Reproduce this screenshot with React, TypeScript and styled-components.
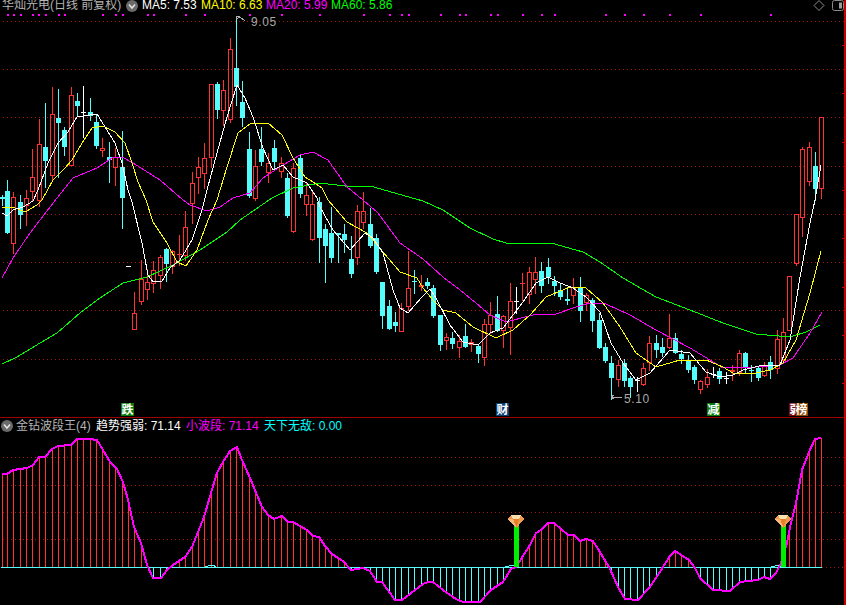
import React from "react";
import styled, { createGlobalStyle } from "styled-components";

const GlobalStyle = createGlobalStyle`
  html, body { margin: 0; padding: 0; background: #000; }
  body { font-family: "Liberation Sans", "Noto Sans CJK SC", sans-serif; overflow: hidden; }
`;

const Page = styled.div`
  width: 846px;
  height: 605px;
  box-sizing: border-box;
  background: #000;
  border-right: 2px solid #c80000;
  display: flex;
  flex-direction: column;
`;
const PricePanel = styled.section`
  height: 417px;
  display: flex;
  flex-direction: column;
`;
const IndicatorPanel = styled.section`
  flex: 1;
  min-height: 0;
  border-top: 1px solid #a00000;
  display: flex;
  flex-direction: column;
`;
const TopLegend = styled.header`
  height: 12px;
  flex: none;
  display: flex;
  align-items: flex-start;
  padding-left: 2px;
  font-size: 12px;
  line-height: 11px;
  white-space: nowrap;
`;
const SubLegend = styled.header`
  height: 16px;
  flex: none;
  display: flex;
  align-items: center;
  padding-left: 1px;
  font-size: 12px;
  line-height: 14px;
  white-space: nowrap;
`;
const Title = styled.span`
  color: #b4b4b4;
  width: ${(p: { $w: number }) => p.$w}px;
  flex: none;
`;
const Reading = styled.span<{ $color: string; $w: number }>`
  color: ${(p) => p.$color};
  width: ${(p) => p.$w}px;
  flex: none;
`;
const Chevron = styled.svg<{ $mr: number }>`
  width: 12px;
  height: 12px;
  flex: none;
  margin-right: ${(p) => p.$mr}px;
`;
const CornerTools = styled.div`
  margin-left: auto;
  display: flex;
  align-items: flex-start;
  gap: 7px;
  padding-right: 0;
`;
const ToolIcon = styled.svg`
  width: 12px;
  height: 11px;
  display: block;
`;
const Chart = styled.svg`
  display: block;
  flex: 1;
  min-height: 0;
  width: 844px;
`;

const RED = "#ff3232";
const CYAN = "#54fcfc";

type Candle = [number, number, number, number, number, string];
// x, high, body top, body bottom, low, kind (r red, c cyan, w white doji)
const candles: Candle[] = [
  [2,195,197,198,205,"c"],[7,180,191,232,233,"c"],[13,192,197,243,253,"r"],[20,195,202,214,228,"c"],[26,190,198,205,225,"r"],
  [32,149,177,191,200,"r"],[39,119,144,200,206,"r"],[45,103,147,160,187,"c"],[52,87,114,175,180,"r"],[58,89,118,122,177,"c"],
  [64,127,130,146,155,"c"],[71,87,95,165,165,"r"],[77,93,101,105,115,"c"],[83,86,112,112,137,"w"],[90,98,112,115,120,"c"],
  [96,115,122,145,148,"c"],[102,138,148,150,156,"r"],[109,142,157,159,182,"c"],[115,148,157,167,185,"r"],[122,131,167,197,228,"c"],
  [128,266,266,266,266,"w"],[134,292,313,329,329,"r"],[141,260,279,301,304,"r"],[147,269,282,289,299,"r"],[153,261,270,283,292,"r"],
  [160,255,257,275,288,"r"],[166,248,249,263,281,"c"],[172,250,251,266,273,"r"],[179,235,254,254,265,"r"],[185,211,227,255,260,"r"],
  [192,172,183,203,223,"r"],[198,157,167,177,193,"r"],[204,143,158,173,188,"r"],[211,84,84,157,167,"r"],[217,82,84,109,118,"c"],
  [223,80,90,110,125,"r"],[230,38,49,119,122,"r"],[236,16,68,86,105,"c"],[242,81,102,117,126,"c"],[249,132,149,195,197,"c"],
  [255,150,166,198,200,"r"],[261,127,149,161,165,"c"],[268,153,163,172,182,"r"],[274,140,148,161,170,"c"],[281,157,163,171,177,"r"],
  [287,173,178,215,217,"c"],[293,163,168,231,232,"r"],[300,155,158,193,197,"c"],[306,182,195,204,215,"r"],[312,192,204,239,240,"r"],
  [319,197,202,237,262,"c"],[325,224,229,245,282,"c"],[331,207,233,257,262,"c"],[338,233,233,234,262,"c"],[344,224,234,239,252,"c"],
  [351,236,259,273,277,"c"],[357,205,211,257,264,"r"],[363,192,211,222,228,"r"],[370,208,224,245,247,"c"],[376,234,238,271,273,"c"],
  [382,282,282,315,328,"c"],[389,300,306,328,329,"c"],[395,312,322,325,331,"c"],[401,303,308,331,331,"r"],[408,251,288,306,310,"r"],
  [414,270,281,281,293,"c"],[421,275,285,286,290,"r"],[427,278,282,285,288,"c"],[433,285,288,315,317,"c"],[440,315,315,344,350,"c"],
  [446,333,337,340,349,"r"],[452,332,338,343,348,"c"],[459,335,341,347,357,"r"],[465,324,336,346,347,"c"],[471,339,342,344,351,"r"],
  [478,344,346,353,362,"c"],[484,319,324,357,365,"r"],[490,302,315,324,333,"r"],[497,296,314,330,331,"c"],[503,315,316,330,347,"r"],
  [510,283,301,327,354,"r"],[516,287,301,301,313,"w"],[522,273,283,283,300,"r"],[529,267,272,294,303,"r"],[535,257,272,279,293,"r"],
  [541,262,271,285,292,"c"],[548,258,267,276,283,"c"],[554,276,281,285,295,"c"],[560,283,290,296,299,"c"],[567,289,299,300,304,"c"],
  [573,278,287,295,303,"r"],[580,277,287,310,321,"c"],[586,293,295,302,310,"r"],[592,298,300,320,331,"c"],[599,313,320,347,348,"c"],
  [605,343,347,360,362,"c"],[611,356,363,377,399,"c"],[618,360,365,379,386,"r"],[624,359,363,380,386,"c"],[630,376,378,386,397,"c"],
  [637,377,380,380,391,"w"],[643,363,368,384,385,"r"],[649,336,343,362,370,"r"],[656,335,343,349,357,"c"],[662,338,347,352,356,"c"],
  [669,314,338,347,348,"r"],[675,333,338,352,353,"c"],[681,350,354,358,363,"c"],[688,355,360,369,372,"c"],[694,365,367,379,383,"c"],
  [700,380,381,389,393,"r"],[707,369,377,384,387,"r"],[713,367,374,374,377,"w"],[719,368,371,378,383,"c"],[726,372,378,378,383,"w"],
  [732,365,370,371,380,"r"],[739,350,353,372,375,"r"],[745,352,353,367,373,"c"],[751,365,370,370,381,"c"],[758,366,368,377,380,"c"],
  [764,362,365,375,376,"r"],[770,356,362,369,378,"c"],[777,330,339,368,373,"r"],[783,318,332,360,360,"r"],[789,276,276,330,330,"r"],
  [796,214,214,263,265,"r"],[802,147,149,217,236,"r"],[809,142,147,181,185,"r"],[815,152,166,188,200,"c"],[821,117,117,188,198,"r"],
];

const ma5: number[][] = [[2,213],[7,216],[13,210],[23,207],[33,201],[38,190],[48,163],[58,143],[68,132],[77,117],[83,116],[97,114],[115,143],[122,163],[128,190],[132,202],[142,243],[148,275],[153,282],[162,281],[170,268],[180,260],[192,240],[202,210],[207,190],[217,153],[227,117],[237,85],[245,98],[253,117],[263,148],[273,170],[283,165],[293,177],[307,183],[317,198],[320,207],[333,230],[350,250],[365,233],[373,238],[383,253],[393,290],[400,308],[408,313],[422,297],[430,289],[436,298],[450,325],[463,342],[478,345],[490,333],[503,328],[513,315],[523,302],[536,283],[548,277],[560,283],[573,288],[586,297],[600,312],[611,343],[623,363],[636,380],[650,373],[670,350],[690,353],[706,372],[720,377],[733,375],[743,370],[763,365],[780,365],[790,340],[800,277],[810,223],[815,200],[821,165]];
const ma10: number[][] = [[2,207],[13,207],[25,212],[37,205],[42,200],[53,180],[65,168],[72,160],[82,143],[92,128],[103,126],[115,132],[125,143],[132,163],[138,182],[146,200],[153,222],[167,243],[177,262],[186,266],[197,250],[208,220],[217,200],[227,167],[238,133],[250,124],[268,123],[282,135],[293,158],[305,177],[313,182],[322,188],[328,200],[347,222],[367,233],[383,252],[400,272],[417,278],[423,288],[433,300],[443,310],[456,313],[473,327],[496,338],[513,330],[530,315],[546,297],[570,287],[586,288],[603,303],[620,327],[636,353],[656,367],[680,360],[706,360],[723,367],[733,373],[756,373],[770,370],[783,363],[796,340],[810,293],[821,251]];
const ma20: number[][] = [[2,278],[13,258],[30,233],[57,198],[73,178],[97,168],[112,158],[122,157],[133,163],[160,180],[183,200],[190,205],[207,211],[220,207],[233,198],[250,193],[263,178],[283,165],[300,155],[313,152],[328,160],[347,187],[363,200],[378,213],[400,243],[423,259],[443,277],[460,290],[476,303],[490,315],[506,322],[533,315],[556,314],[573,308],[590,303],[606,304],[630,315],[656,330],[690,348],[710,360],[723,368],[756,367],[780,365],[793,358],[810,333],[822,312]];
const ma60: number[][] = [[2,364],[17,357],[40,343],[57,333],[80,313],[100,298],[123,283],[147,277],[173,265],[200,250],[227,232],[240,220],[272,198],[293,188],[320,183],[353,187],[370,186],[423,201],[443,210],[470,228],[493,239],[506,243],[551,243],[583,252],[600,262],[623,278],[656,297],[690,310],[723,323],[756,334],[790,337],[806,332],[820,325]];
const wave: number[][] = [[2,474],[7,474],[13,470],[20,469],[27,468],[33,465],[39,457],[45,457],[52,449],[58,446],[71,445],[77,439],[90,439],[97,440],[103,450],[110,462],[117,469],[123,482],[128,500],[134,527],[141,543],[147,565],[153,578],[161,578],[167,570],[173,565],[185,557],[192,547],[198,532],[204,517],[211,493],[217,473],[223,462],[230,451],[237,447],[242,460],[250,478],[257,495],[262,507],[268,515],[274,519],[282,516],[288,522],[293,522],[307,530],[313,536],[319,537],[325,546],[332,554],[338,558],[343,561],[351,570],[363,568],[370,571],[377,582],[382,582],[395,600],[402,600],[423,584],[428,582],[433,582],[443,590],[456,599],[463,602],[480,602],[491,590],[503,582],[511,569],[516,567],[530,545],[536,533],[541,530],[548,523],[554,523],[561,529],[568,535],[574,535],[580,541],[586,539],[593,541],[600,552],[610,569],[618,587],[625,599],[638,600],[650,587],[663,567],[670,556],[675,551],[689,560],[695,568],[700,578],[713,590],[730,591],[740,582],[758,580],[764,577],[770,579],[776,573],[781,563],[787,543],[790,527],[796,503],[802,470],[809,452],[815,439],[821,438]];

const dotsX = [7,13,20,32,38,45,58,64,102,115,122,147,153,185,204,249,281,319,363,389,401,408,440,459,465,490,497,522,541,554,605,624,643,669,700,770];
const priceGrid = [21,69,117,166,214,262,310,359];
const priceTicks = [45,93,142,190,238,287,335,383];
const subGrid = [457,485,512,539];

const pts = (a: number[][]) => a.map((p) => p.join(",")).join(" ");
const waveY = (x: number) => {
  for (let i = 1; i < wave.length; i++) {
    if (x <= wave[i][0]) {
      const [x0, y0] = wave[i - 1];
      const [x1, y1] = wave[i];
      return y0 + ((y1 - y0) * (x - x0)) / (x1 - x0);
    }
  }
  return wave[wave.length - 1][1];
};

const CandleMark = ({ c }: { c: Candle }) => {
  const [x, hi, top, bot, lo, kind] = c;
  const cx = x + 0.5;
  const color = kind === "r" ? RED : kind === "c" ? CYAN : "#fff";
  if (top === bot) {
    return (
      <g stroke={color}>
        <line x1={cx} x2={cx} y1={hi} y2={lo + 1} />
        <line x1={x - 2} x2={x + 3} y1={top + 0.5} y2={top + 0.5} />
      </g>
    );
  }
  if (kind === "r") {
    return (
      <g stroke={color} fill="none">
        <line x1={cx} x2={cx} y1={hi} y2={top} />
        <line x1={cx} x2={cx} y1={bot} y2={lo + 1} />
        <rect x={x - 1.5} y={top + 0.5} width={4} height={bot - top} />
      </g>
    );
  }
  return (
    <g>
      <line x1={cx} x2={cx} y1={hi} y2={lo + 1} stroke={color} />
      <rect x={x - 2} y={top} width={5} height={bot - top + 1} fill={color} />
    </g>
  );
};

const ChevronIcon = ({ mr }: { mr: number }) => (
  <Chevron $mr={mr} viewBox="0 0 12 12">
    <circle cx="6" cy="6" r="6" fill="#6a6a6a" />
    <path d="M3 4.5 L6 8 L9 4.5" fill="none" stroke="#e4e4e4" strokeWidth="1.5" />
  </Chevron>
);

const Gem = ({ x }: { x: number }) => (
  <g>
    <polygon points={`${x - 8},519 ${x - 5},515 ${x + 5},515 ${x + 8},519 ${x + 0.5},528`} fill="#f09a50" />
    <polygon points={`${x - 5},515 ${x + 5},515 ${x + 3},519 ${x - 3},519`} fill="#fbe0b0" />
    <polygon points={`${x - 3},519 ${x + 3},519 ${x + 0.5},528`} fill="#e87e28" />
    <polygon points={`${x - 8},519 ${x - 3},519 ${x + 0.5},528`} fill="#f8b878" />
  </g>
);

const Badge = ({ x, w, bg, label }: { x: number; w: number; bg: string; label: string }) => (
  <g>
    <rect x={x} y={403} width={w} height={13} fill={bg} />
    <text x={x + w - 6.5} y={414} textAnchor="middle" fontSize="12" fill="#fff" fontWeight="700"
      fontFamily='"Noto Sans CJK SC", sans-serif'>{label}</text>
  </g>
);

const PriceNote = styled.text`
  font-family: "Liberation Sans", sans-serif;
  font-size: 12px;
  fill: #a8a8a8;
  letter-spacing: 0.6px;
`;

export default function App() {
  return (
    <>
      <GlobalStyle />
      <Page>
        <PricePanel>
          <TopLegend>
            <Title $w={124}>华灿光电(日线 前复权)</Title>
            <ChevronIcon mr={4} />
            <Reading $color="#ffffff" $w={59}>MA5: 7.53</Reading>
            <Reading $color="#ffff00" $w={65}>MA10: 6.63</Reading>
            <Reading $color="#ff00ff" $w={65}>MA20: 5.99</Reading>
            <Reading $color="#00ff00" $w={65}>MA60: 5.86</Reading>
            <CornerTools>
              <ToolIcon viewBox="0 0 12 11">
                <polygon points="6,0.5 11,5.5 6,10.5 1,5.5" fill="none" stroke="#8a8a8a" />
              </ToolIcon>
              <ToolIcon viewBox="0 0 12 11">
                <rect x="0.5" y="0.5" width="11" height="10" rx="2" fill="none" stroke="#8a8a8a" />
                <rect x="7" y="2.5" width="3" height="6" fill="#9a9a9a" />
              </ToolIcon>
            </CornerTools>
          </TopLegend>
          <Chart viewBox="0 12 844 405" shapeRendering="crispEdges">
            {priceGrid.map((y) => (
              <line key={y} x1="3" x2="844" y1={y + 0.5} y2={y + 0.5} stroke="#a01414" strokeDasharray="1 3" />
            ))}
            {priceTicks.map((y) => (
              <line key={y} x1="842" x2="844" y1={y + 0.5} y2={y + 0.5} stroke="#c80000" />
            ))}
            {dotsX.map((x) => (
              <rect key={x} x={x} y={14} width="2" height="2" fill="#ff00ff" />
            ))}
            {candles.map((c) => (
              <CandleMark key={c[0]} c={c} />
            ))}
            <polyline points={pts(ma60)} fill="none" stroke="#00ff00" />
            <polyline points={pts(ma20)} fill="none" stroke="#ff00ff" />
            <polyline points={pts(ma10)} fill="none" stroke="#ffff00" />
            <polyline points={pts(ma5)} fill="none" stroke="#ffffff" />
            <path d="M236 19 L236 16 L240 16 M236 19 L240 17 L245 21" fill="none" stroke="#b0b0b0" />
            <PriceNote x="251" y="26">9.05</PriceNote>
            <path d="M611 397 L622 397 M611 397 L614 395 M611 397 L614 399" fill="none" stroke="#b0b0b0" />
            <PriceNote x="624" y="403">5.10</PriceNote>
            <Badge x={121} w={13} bg="#0a7a0a" label="跌" />
            <Badge x={496} w={13} bg="#0a3d70" label="财" />
            <Badge x={707} w={13} bg="#0a7a0a" label="减" />
            <Badge x={789} w={13} bg="#7a0a0a" label="弱" />
            <Badge x={796} w={12} bg="#8a4a0a" label="榜" />
          </Chart>
        </PricePanel>
        <IndicatorPanel>
          <SubLegend>
            <ChevronIcon mr={3} />
            <Title $w={80}>金钻波段王(4)</Title>
            <Reading $color="#ffffff" $w={90}>趋势强弱: 71.14</Reading>
            <Reading $color="#ff00ff" $w={78}>小波段: 71.14</Reading>
            <Reading $color="#00ffff" $w={90}>天下无敌: 0.00</Reading>
          </SubLegend>
          <Chart viewBox="0 434 844 171" shapeRendering="crispEdges">
            {subGrid.map((y) => (
              <line key={y} x1="3" x2="844" y1={y + 0.5} y2={y + 0.5} stroke="#a01414" strokeDasharray="1 3" />
            ))}
            <line x1="822" x2="844" y1="567.5" y2="567.5" stroke="#a01414" strokeDasharray="1 3" />
            {candles.map((c) => {
              const y = waveY(c[0]);
              return (
                <line key={c[0]} x1={c[0] + 0.5} x2={c[0] + 0.5} y1={y} y2={567}
                  stroke={y < 567 ? RED : CYAN} />
              );
            })}
            <line x1="1" x2="822" y1="567.5" y2="567.5" stroke={CYAN} />
            <polyline points="205,567 208,566 213,565 216,567" fill="none" stroke={CYAN} />
            <polyline points="505,567 509,566 513,565 515,567" fill="none" stroke={CYAN} />
            <polyline points="771,567 775,566 779,565 781,567" fill="none" stroke={CYAN} />
            <polyline points={pts(wave)} fill="none" stroke="#ff00ff" strokeWidth="2" />
            <rect x="514" y="525" width="5" height="42" fill="#00ee00" />
            <rect x="781" y="525" width="5" height="42" fill="#00ee00" />
            <Gem x={516} />
            <Gem x={783} />
          </Chart>
        </IndicatorPanel>
      </Page>
    </>
  );
}
